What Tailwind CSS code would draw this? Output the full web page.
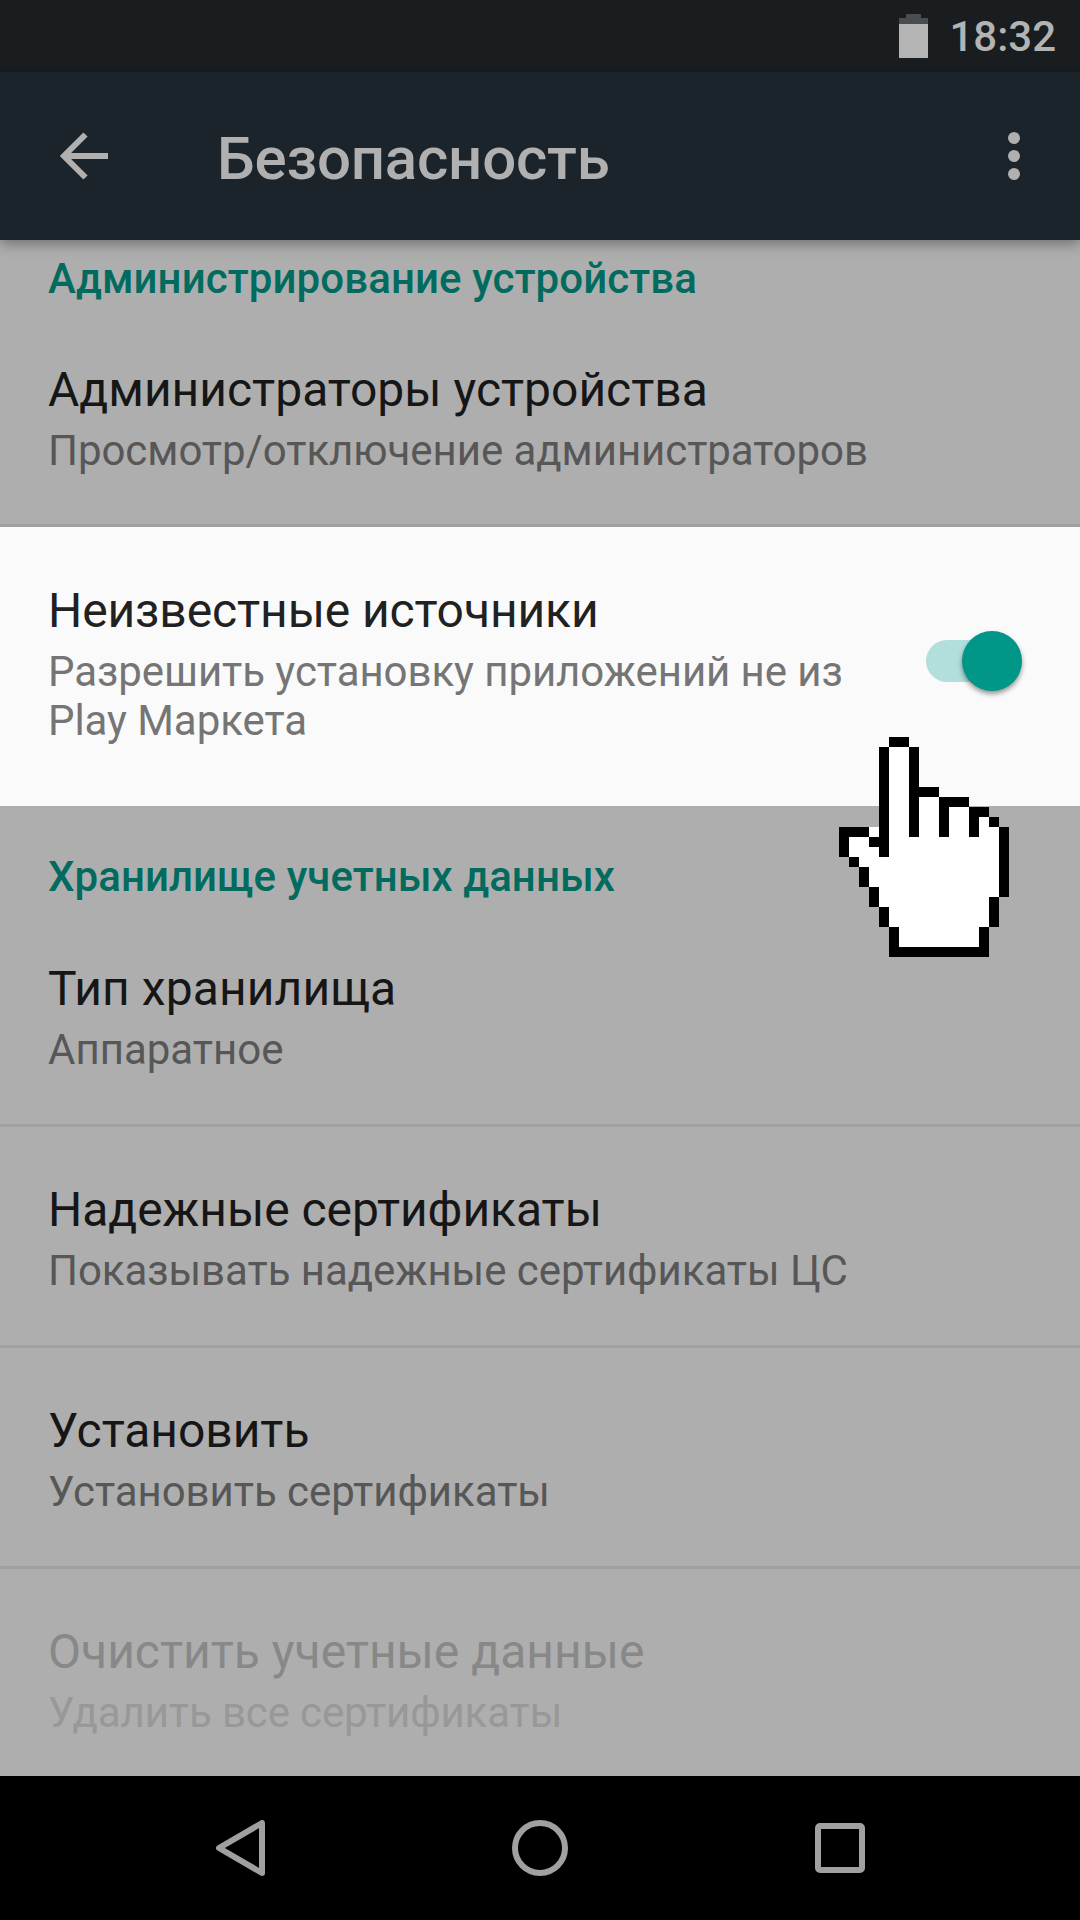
<!DOCTYPE html>
<html lang="ru">
<head>
  <meta charset="UTF-8" />
  <meta name="viewport" content="width=device-width, initial-scale=1.0" />
  <title>Безопасность</title>
  <script src="https://cdn.jsdelivr.net/npm/@tailwindcss/browser@4"></script>
</head>
<body class="font-['Roboto',sans-serif]">
<div class="relative w-[1080px] h-[1920px] overflow-hidden flex flex-col bg-[#aeaeae]">

  <!-- Status bar -->
  <div class="h-[72px] bg-[#191d20] flex items-center justify-end pr-[24px] shrink-0">
    <svg class="w-[29px] h-[44px] mr-[21px]" viewBox="0 0 29 44">
      <path d="M7 0h15v4h7v40H0V4h7z" fill="#b4b4b4" />
      <path d="M7 0h15v4h7v6H0V4h7z" fill="#4a4d4f" />
    </svg>
    <span class="pt-[2px] text-[42px] leading-none font-medium text-[#b3b3b3]">18:32</span>
  </div>

  <!-- Toolbar -->
  <div class="relative z-10 h-[168px] bg-[#1b242b] flex items-center shrink-0 shadow-[0_4px_12px_rgba(0,0,0,0.35)]">
    <svg class="ml-[60px] w-[48px] h-[48px]" viewBox="0 0 48 48">
      <path d="M48 24H4M25.5 2.5 4 24l21.5 21.5" fill="none" stroke="#b0b0b0" stroke-width="6" />
    </svg>
    <span class="ml-[109px] pt-[5px] text-[60px] leading-none font-medium tracking-[-0.2px] text-[#b0b0b0]">Безопасность</span>
    <svg class="ml-auto mr-[59px] w-[14px] h-[48px]" viewBox="0 0 14 48">
      <circle cx="7" cy="6" r="6" fill="#b0b0b0" />
      <circle cx="7" cy="24" r="6" fill="#b0b0b0" />
      <circle cx="7" cy="42" r="6" fill="#b0b0b0" />
    </svg>
  </div>

  <!-- Settings list -->
  <div class="flex-1 flex flex-col">
    <div class="h-[76px] pl-[48px] flex items-center text-[42px] font-medium tracking-[0.1px] text-[#006b5e]">Администрирование устройства</div>

    <div class="h-[211px] pl-[48px] pt-[44px] border-b-[3px] border-[#a0a0a0]">
      <div class="text-[48px] leading-[60px] text-[#161616]">Администраторы устройства</div>
      <div class="mt-[6px] text-[42px] leading-[49px] tracking-[-0.05px] text-[#575757]">Просмотр/отключение администраторов</div>
    </div>

    <!-- Highlighted row -->
    <div class="h-[279px] bg-[#fafafa] pl-[48px] pt-[54px] flex">
      <div>
        <div class="text-[48px] leading-[60px] tracking-[-0.1px] text-[#212121]">Неизвестные источники</div>
        <div class="mt-[6px] text-[42px] leading-[49px] tracking-[-0.06px] text-[#757575]">Разрешить установку приложений не из<br />Play Маркета</div>
      </div>
      <div class="relative ml-auto mr-[60px] mt-[59px] w-[94px] h-[42px] rounded-full bg-[#b2dfdb]">
        <div class="absolute right-[-2px] top-[-9px] w-[60px] h-[60px] rounded-full bg-[#009688] shadow-[0_3px_5px_rgba(0,0,0,0.4)]"></div>
      </div>
    </div>

    <div class="h-[102px] pl-[48px] flex items-end text-[42px] leading-[63px] font-medium tracking-[0.05px] text-[#006b5e]">Хранилище учетных данных</div>

    <div class="h-[219px] pl-[48px] pt-[51px] border-b-[3px] border-[#a0a0a0]">
      <div class="text-[48px] leading-[60px] tracking-[0.1px] text-[#161616]">Тип хранилища</div>
      <div class="mt-[6px] text-[42px] leading-[49px] text-[#575757]">Аппаратное</div>
    </div>
    <div class="h-[221px] pl-[48px] pt-[53px] border-b-[3px] border-[#a0a0a0]">
      <div class="text-[48px] leading-[60px] tracking-[-0.05px] text-[#161616]">Надежные сертификаты</div>
      <div class="mt-[6px] text-[42px] leading-[49px] tracking-[-0.05px] text-[#575757]">Показывать надежные сертификаты ЦС</div>
    </div>
    <div class="h-[221px] pl-[48px] pt-[53px] border-b-[3px] border-[#a0a0a0]">
      <div class="text-[48px] leading-[60px] tracking-[-0.05px] text-[#161616]">Установить</div>
      <div class="mt-[6px] text-[42px] leading-[49px] tracking-[-0.05px] text-[#575757]">Установить сертификаты</div>
    </div>
    <div class="flex-1 pl-[48px] pt-[53px]">
      <div class="text-[48px] leading-[60px] text-[#888888]">Очистить учетные данные</div>
      <div class="mt-[6px] text-[42px] leading-[49px] tracking-[-0.12px] text-[#989898]">Удалить все сертификаты</div>
    </div>
  </div>

  <!-- Navigation bar -->
  <div class="h-[144px] bg-black shrink-0 flex items-center justify-between pl-[216px] pr-[215px]">
    <svg class="w-[50px] h-[56px]" viewBox="0 0 50 56">
      <path d="M46 3v50L3 28z" fill="none" stroke="#a0a0a0" stroke-width="6" stroke-linejoin="round" />
    </svg>
    <svg class="w-[56px] h-[56px] -translate-x-[1px]" viewBox="0 0 56 56">
      <circle cx="28" cy="28" r="25" fill="none" stroke="#a0a0a0" stroke-width="6" />
    </svg>
    <svg class="w-[50px] h-[50px]" viewBox="0 0 50 50">
      <rect x="3" y="3" width="44" height="44" rx="2" fill="none" stroke="#a0a0a0" stroke-width="6" />
    </svg>
  </div>

  <!-- Pixel hand cursor -->
  <svg class="absolute left-[839px] top-[737px] w-[170px] h-[220px]" viewBox="0 0 17 22" shape-rendering="crispEdges">
    <path fill="#fff" d="M5 1h2v4h3v1h3v1h2v1h1v1h1v6h-1v1h-1v3h-1v2H6v-2H5v-2H4v-2H3v-2H2v-1H1V9h3v2h1z" />
    <path fill="#000" d="M5 0h2v1H5zM4 1h1v10H4zM7 1h1v9H7zM8 5h2v1H8zM10 6h3v1h-3zM10 7h1v3h-1zM13 7h2v1h-2zM13 8h1v2h-1zM15 8h1v1h-1zM16 9h1v7h-1zM15 16h1v3h-1zM14 19h1v3h-1zM5 21h9v1H5zM5 19h1v2H5zM4 17h1v2H4zM3 15h1v2H3zM2 13h1v2H2zM1 12h1v1H1zM0 9h3v1H0zM0 10h1v2H0zM3 10h1v1H3zM4 11h1v1H4z" />
  </svg>
</div>
</body>
</html>
